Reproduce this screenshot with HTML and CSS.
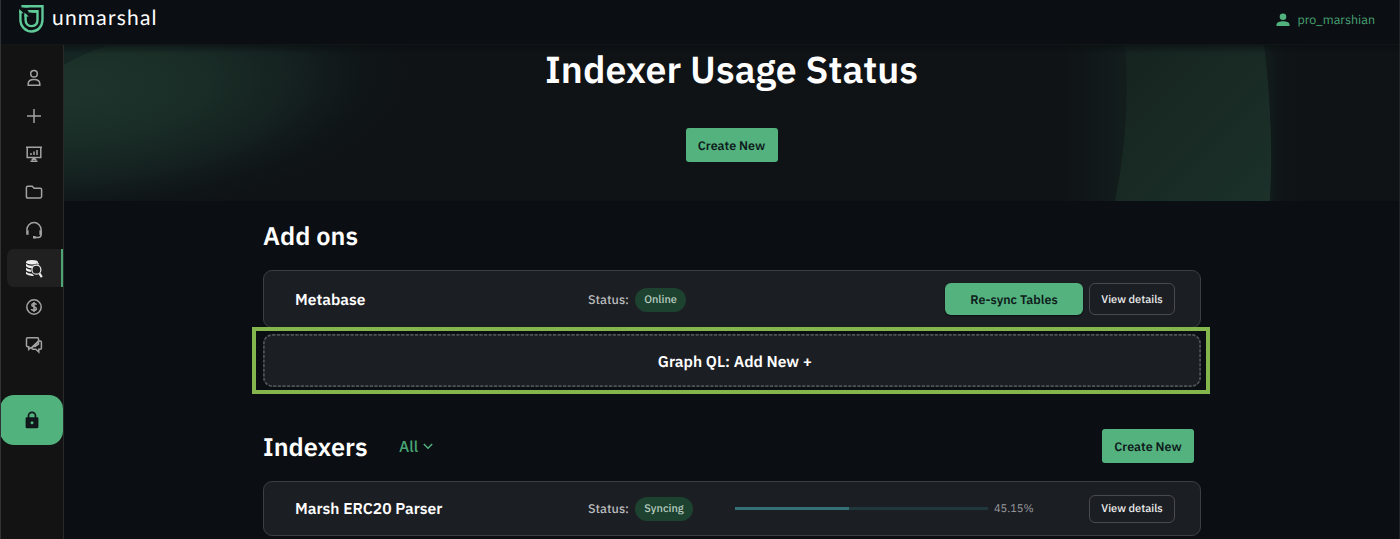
FILE: index.html
```html
<!DOCTYPE html>
<html lang="en">
<head>
<meta charset="utf-8">
<title>Indexer Usage Status</title>
<link rel="stylesheet" href="styles.css">
</head>
<body>
<header class="topbar">
  <div class="brand">
    <svg class="brand-mark" width="26" height="29" viewBox="0 0 26 29" fill="none" stroke="#5fc998" stroke-width="2.4">
      <path d="M2.5 1.3H23.5V14.5C23.5 21.5 18.7 26.5 12.7 26.5S1.4 21.5 1.4 14.5V6"/>
      <path d="M9.5 6.2H18.5V14.8C18.5 19 16.5 21.1 12.7 21.1S6.6 19 6.6 14.8V9.5"/>
      <path d="M2 .1H9L10 2.4H5.5zM8 5L13 7.8H18V5zM.2 4L4.6 8.2H.2zM5.4 7.5L9.8 11.5H5.4z" fill="#5fc998" stroke="none"/>
    </svg>
    <span class="brand-name">unmarshal</span>
  </div>
  <div class="user">
    <svg width="14" height="14" viewBox="0 0 14 14" fill="#52b27e"><circle cx="7" cy="3.7" r="3.3"/><path d="M.5 13V11.4C.5 9.2 4 8.2 7 8.2s6.5 1 6.5 3.2V13z"/></svg>
    <span class="user-name">pro_marshian</span>
  </div>
</header>
<div class="shell">
  <nav class="sidebar">
    <a class="item"><svg width="18" height="18" viewBox="0 0 18 18"><circle cx="9" cy="4.7" r="3.3"/><path d="M3.2 16.2V14.8C3.2 12 5.6 10.4 9 10.4s5.8 1.6 5.8 4.4v1.4z"/></svg></a>
    <a class="item"><svg width="18" height="18" viewBox="0 0 18 18"><path d="M9 2v14M2 9h14"/></svg></a>
    <a class="item"><svg width="18" height="18" viewBox="0 0 18 18"><path d="M1 2.2h16M2.2 2.2v10.2h13.6V2.2M6 10V8M9 10V6.5M12 10V5M9 12v3M5.5 16.2h7M6.8 15.2L8 14h2l1.2 1.2"/></svg></a>
    <a class="item"><svg width="18" height="18" viewBox="0 0 18 18"><path d="M2.8 3.2h4.4l2 2h6q1.4 0 1.4 1.4v7q0 1.4-1.4 1.4H2.8q-1.4 0-1.4-1.4v-9q0-1.4 1.4-1.4z"/></svg></a>
    <a class="item"><svg width="18" height="18" viewBox="0 0 18 18"><path d="M1.9 9.5V8.7a7.1 7.1 0 0 1 14.2 0V13.5q0 3-3 3H9"/><path d="M2.4 9.3v4.4M15.6 9.3v4.4M8 16.2h2.7" stroke-width="2.4"/></svg></a>
    <a class="item active"><svg width="18" height="20" viewBox="0 0 18 20"><ellipse cx="7" cy="3.2" rx="6" ry="2.3" fill="#eee" stroke="none"/><path d="M1 4.8v2.5q2 1.9 5.4 1.9l2-2.7Q3.4 7.2 1 4.8zM1 8.8v2.4q1.6 1.6 4.9 1.8V10.7Q2.5 10.4 1 8.8zM1 12.8v2.3q2.6 2.2 8.2 1.7L7 14.7Q2.7 14.6 1 12.8z" fill="#eee" stroke="none"/><path d="M13 4v1.5" stroke="#eee"/><circle cx="11.4" cy="10.7" r="4.5" stroke="#eee" stroke-width="1.2"/><path d="M14.4 14.4l2.4 3.7" stroke="#eee" stroke-width="2.2"/></svg></a>
    <a class="item"><svg width="18" height="18" viewBox="0 0 18 18"><circle cx="9" cy="9" r="7.2"/><path stroke-width="1.6" d="M11.4 6.8Q11 5.5 9 5.5T6.8 7.1Q6.8 8.4 9 8.8T11.4 10.8Q11.4 12.4 9 12.4T6.5 11M9 4v10"/></svg></a>
    <a class="item"><svg width="18" height="18" viewBox="0 0 18 18"><path d="M5.5 11.8L3.7 13.3V10.8H2.5Q1.5 10.8 1.5 9.8V2.7Q1.5 1.7 2.5 1.7h10q1 0 1 1V5L6.4 11.8z"/><path d="M13.5 5H15.4q1 0 1 1v6.3q0 1-1 1H13.8V16l-3-2.7H7.8q-1-.2-1-1.3L13.5 5.4V8L9.5 10.8"/></svg></a>
    <a class="lock"><svg width="14" height="18" viewBox="0 0 14 18"><path d="M3.5 7V4.8a3.5 3.5 0 0 1 7 0V7" fill="none" stroke="#10171b" stroke-width="1.7"/><rect x=".6" y="6.3" width="12.8" height="11" rx="1.3" fill="#10171b"/><circle cx="7" cy="11.8" r="1.5" fill="#52b27e"/></svg></a>
  </nav>
  <main class="main">
    <section class="hero">
      <svg class="hero-art" viewBox="0 0 1336 157" preserveAspectRatio="none">
        <defs>
          <linearGradient id="band" x1="0" y1="0" x2="1" y2="1"><stop offset="0" stop-color="#15231f"/><stop offset=".5" stop-color="#192a24"/><stop offset="1" stop-color="#1b312a"/></linearGradient>
          <linearGradient id="fadeL" x1="0" x2="1"><stop offset="0" stop-color="#14211e" stop-opacity="0"/><stop offset="1" stop-color="#14211e" stop-opacity=".8"/></linearGradient>
          <linearGradient id="fadeR" x1="0" x2="1"><stop offset="0" stop-color="#16241f" stop-opacity=".6"/><stop offset=".5" stop-color="#10161a" stop-opacity=".3"/><stop offset="1" stop-color="#10151a" stop-opacity="0"/></linearGradient>
          <radialGradient id="leaf" gradientUnits="userSpaceOnUse" cx="0" cy="0" r="1" gradientTransform="translate(10 45) rotate(-4) scale(350 140)"><stop offset="0" stop-color="#1d342c"/><stop offset=".35" stop-color="#1a2e27"/><stop offset=".65" stop-color="#14201f"/><stop offset="1" stop-color="#0e1316" stop-opacity="0"/></radialGradient>
          <linearGradient id="shade" x1="0" x2="0" y1="0" y2="1"><stop offset="0" stop-color="#090d11" stop-opacity=".6"/><stop offset="1" stop-color="#090d11" stop-opacity="0"/></linearGradient>
        </defs>
        <rect width="1336" height="157" fill="url(#leaf)"/>
        <path d="M0 0H45Q20 8 0 20z" fill="#121f20" opacity=".6"/>
        <rect x="1000" width="66" height="157" fill="url(#fadeL)"/>
        <path d="M1062 0H1201Q1211 79 1207 157H1052Q1068 76 1062 0z" fill="url(#band)"/>
        <path d="M1201 0Q1211 79 1207 157H1245V0z" fill="url(#fadeR)"/>
        <rect width="1336" height="9" fill="url(#shade)"/>
      </svg>
      <h1 class="title">Indexer Usage Status</h1>
      <button class="btn create">Create New</button>
    </section>
    <div class="content">
      <h2 class="heading">Add ons</h2>
      <div class="card metabase">
        <span class="name meta-name">Metabase</span>
        <span class="status">Status:</span>
        <span class="pill online">Online</span>
        <div class="actions">
          <button class="btn resync">Re-sync Tables</button>
          <button class="view">View details</button>
        </div>
      </div>
      <div class="highlight">
        <button class="add">
          <svg class="dashes" width="938" height="53" fill="none" stroke="#505357" stroke-width="1.7" stroke-dasharray="3.1 1.5"><rect x=".9" y=".9" width="936.2" height="51.2" rx="8.5"/></svg>
          Graph QL: Add New +
        </button>
      </div>
      <div class="section-head">
        <h2 class="heading indexers">Indexers</h2>
        <span class="filter">All</span>
        <svg class="chevron" width="10" height="7" viewBox="0 0 10 7" fill="none" stroke="#52b27e" stroke-width="1.5"><path d="M.8 1L5 5.2 9.2 1"/></svg>
        <button class="btn create right">Create New</button>
      </div>
      <div class="card parser">
        <span class="name parser-name">Marsh ERC20 Parser</span>
        <span class="status">Status:</span>
        <span class="pill syncing">Syncing</span>
        <div class="progress"><div class="bar" style="width:45.15%"></div></div>
        <span class="percent">45.15%</span>
        <div class="actions"><button class="view">View details</button></div>
      </div>
    </div>
  </main>
</div>
</body>
</html>
```
FILE: styles.css
```css
* { box-sizing: border-box; }
body { margin: 0; height: 539px; overflow: hidden; background: #0b0e13; color: #fff; font-family: "IBM Plex Sans", "Noto Sans", sans-serif; text-rendering: geometricPrecision; border-left: 1px solid #303335; border-right: 1px solid #202324; }
button { font: inherit; padding: 1px 0 0; border: 0; white-space: nowrap; text-rendering: inherit; }
h1, h2 { margin: 0; font-weight: 600; }
span { white-space: nowrap; }
.topbar { height: 45px; display: flex; justify-content: space-between; padding: 0 24px 5px 18px; border-bottom: 1px solid #111619; }
.brand, .user { display: flex; align-items: center; }
.brand-mark { margin-top: -1px; }
.brand-name { margin: -4px 0 0 7px; font-family: Lato, sans-serif; font-size: 21px; line-height: 24px; letter-spacing: 1.2px; }
.user { gap: 8px; color: #48a473; }
.user-name { font-size: 12.5px; }
.shell { display: flex; height: 494px; }
.sidebar { width: 63px; flex: none; background: #131313; border-right: 1px solid #292b2b; padding-top: 13px; }
.item { display: flex; height: 38.2px; align-items: center; justify-content: center; margin-left: 6px; padding: 1px 2px 0 0; }
.item svg { fill: none; stroke: #a3a3a3; stroke-width: 1.5; }
.active { background: #202020; border-radius: 7px 0 0 7px; border-right: 2px solid #4ca575; padding-right: 0; }
.lock { display: flex; align-items: center; justify-content: center; width: 63px; height: 50px; margin: 31px 0 0 -1px; border-radius: 14px; background: #52b27e; }
.main { flex: 1; }
.hero { position: relative; height: 156px; background: #0f1316; display: flex; flex-direction: column; align-items: center; }
.hero-art { position: absolute; left: 0; top: 0; width: 100%; height: 156px; }
.title { position: relative; font-size: 37.5px; line-height: 51px; height: 83px; white-space: nowrap; }
.btn { background: #54b27f; color: #0e1b1b; font-weight: 600; }
.create { position: relative; width: 92px; height: 34px; border-radius: 3px; font-size: 12.5px; flex: none; padding-top: 2px; }
.content { width: 938px; margin: 0 0 0 199px; }
.heading { font-size: 25.3px; line-height: 34px; height: 69px; padding-top: 18px; white-space: nowrap; }
.card { display: flex; align-items: center; background: #1b1e23; border: 1px solid #3b3e43; border-radius: 9px; padding: 0 25px 0 31px; }
.metabase { height: 58px; }
.name { width: 293px; font-size: 15.6px; font-weight: 600; }
.metabase .name, .metabase .status { padding-top: 1px; }
.status { width: 47px; font-size: 12.6px; font-weight: 500; color: #b9babc; }
.pill { height: 24px; line-height: 25px; border-radius: 12px; background: #1d422f; color: #b8ccc0; font-size: 11px; font-weight: 500; text-align: center; }
.metabase .pill { margin-top: 1px; }
.online { width: 51px; }
.syncing { width: 58px; }
.actions { display: flex; gap: 6px; margin-left: auto; }
.resync { width: 138px; height: 32px; border-radius: 6px; font-size: 12.5px; box-shadow: 0 1px 2px #0008; }
.view { width: 86px; height: 32px; border: 1px solid #484a4e; border-radius: 6px; background: transparent; color: #eee; font-size: 11px; font-weight: 500; }
.highlight { position: relative; width: 958px; height: 67px; margin: -1px 0 0 -11px; border: 4px solid #83b64c; padding: 3px 5px 3px 7px; background: #0b0e13; }
.add { position: relative; display: block; width: 938px; height: 53px; border-radius: 9px; background: #1b1e23; color: #fff; font-size: 15.6px; font-weight: 600; padding: 2px 0 0 6px; }
.dashes { position: absolute; left: 0; top: 0; }
.section-head { display: flex; align-items: center; height: 88px; padding: 16px 7px 0 0; }
.indexers { height: 35px; line-height: 36px; padding: 0; width: 136px; }
.filter { color: #48a473; font-size: 15.6px; font-weight: 500; width: 24px; padding-top: 1px; }
.chevron { margin-top: 1px; }
.right { margin-left: auto; }
.parser { height: 55px; margin-top: -1px; }
.parser .view { height: 28px; }
.progress { width: 253px; height: 3px; margin-left: 42px; background: #20383b; }
.bar { height: 100%; background: #347174; }
.percent { margin-left: 6px; color: #9b9da0; font-size: 11px; }
```
